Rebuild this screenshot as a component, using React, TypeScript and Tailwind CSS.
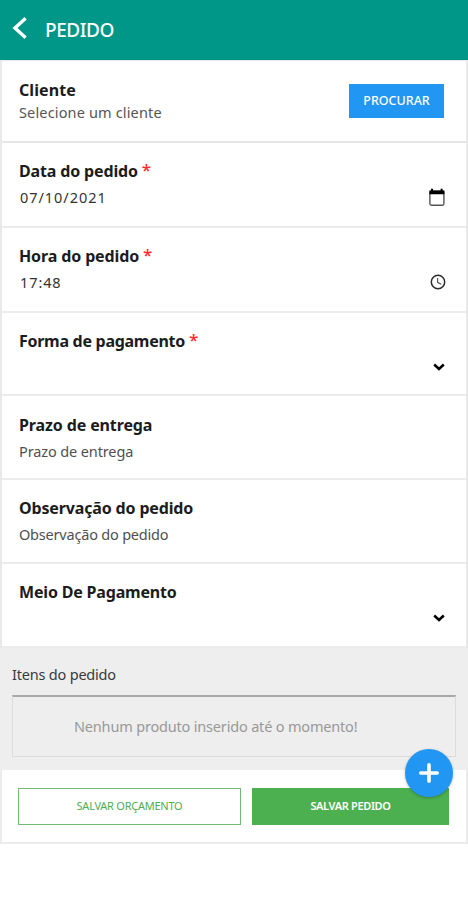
import { ReactNode } from 'react';
import clsx from 'clsx';

interface FieldProps {
  label: string;
  labelClass?: string;
  required?: boolean;
  value?: string;
  valueClass?: string;
  icon?: ReactNode;
  className: string;
}

const CalendarIcon = () => (
  <svg width="18" height="19" viewBox="0 0 18 19" fill="none">
    <rect x="1.9" y="3.2" width="14" height="14" rx="1.4" stroke="#555" strokeWidth="1.4" />
    <path d="M1.4 2.4h15v3.8h-15zM3 .8h2v2H3zM12.6.8h2v2h-2z" fill="#000" />
  </svg>
);

const ClockIcon = () => (
  <svg width="16" height="16" viewBox="0 0 16 16" fill="none">
    <circle cx="8" cy="8" r="6.7" stroke="#2b2b2b" strokeWidth="1.5" />
    <path d="M7.6 4v4.3l3.6 2" stroke="#555" strokeWidth="1.2" />
  </svg>
);

const ChevronIcon = () => (
  <svg width="12" height="8" viewBox="0 0 12 8" fill="none">
    <path d="M1.2 1.5 6 6l4.8-4.5" stroke="#000" strokeWidth="2.5" />
  </svg>
);

const Field = ({ label, labelClass, required, value, valueClass, icon, className }: FieldProps) => (
  <div className={clsx('flex flex-col border-b-2 border-[#ececec] bg-white pl-[17px]', className)}>
    <div className="flex h-6 items-center gap-1 whitespace-nowrap text-[16px] font-bold leading-6 text-[#1c1c1c]">
      <span className={labelClass}>{label}</span>
      {required && <span className="-mt-0.5 text-[17px] font-medium text-[#ff2a2a]">*</span>}
    </div>
    <div className="mt-0.5 flex h-6 items-center justify-between whitespace-nowrap text-[14.5px] leading-6 text-[#505050]">
      <span className={valueClass}>{value}</span>
      {icon}
    </div>
  </div>
);

export default function App() {
  return (
    <div className="relative h-[900px] w-[468px] overflow-hidden bg-white font-['Noto_Sans','Open_Sans',sans-serif]">
      <header className="flex h-[60px] items-center bg-[#009688] pl-3 text-white">
        <svg width="16" height="24" viewBox="0 0 16 24" fill="none" className="-mt-1">
          <path d="M13.6 2.3 3 12l10.6 9.7" stroke="#fff" strokeWidth="3.4" />
        </svg>
        <h1 className="ml-[17px] text-[19px] font-medium leading-6 tracking-[-0.45px]">PEDIDO</h1>
      </header>

      <main className="border-x-2 border-t border-[#e9e9e9]">
        <div className="flex h-[82px] items-center justify-between border-b-2 border-[#e6e6e6] bg-white pl-[17px] pr-[22px]">
          <div className="whitespace-nowrap pb-0.5">
            <div className="text-[16px] font-bold leading-6 tracking-[0.1px] text-[#1c1c1c]">Cliente</div>
            <div className="-mt-px text-[14.5px] leading-[22px] tracking-[0.15px] text-[#555]">Selecione um cliente</div>
          </div>
          <button className="h-[34px] w-[95px] bg-[#2196f3] text-[12.5px] font-medium text-white">PROCURAR</button>
        </div>

        <Field
          className="h-[85px] pt-[16px] pr-[20px]"
          label="Data do pedido"
          labelClass="tracking-[-0.15px]"
          required
          value="07/10/2021"
          valueClass="pl-px tracking-[0.95px] text-[#333]"
          icon={<CalendarIcon />}
        />
        <Field
          className="h-[85px] pt-[16px] pr-[20px]"
          label="Hora do pedido"
          labelClass="tracking-[-0.12px]"
          required
          value="17:48"
          valueClass="pl-px tracking-[0.9px] text-[#333]"
          icon={<ClockIcon />}
        />
        <Field
          className="h-[83px] pt-[16px] pr-[21px]"
          label="Forma de pagamento"
          labelClass="tracking-[-0.28px]"
          required
          icon={<ChevronIcon />}
        />
        <Field
          className="h-[84px] pt-[17px] pr-[21px]"
          label="Prazo de entrega"
          labelClass="tracking-[-0.12px]"
          value="Prazo de entrega"
          valueClass="tracking-[-0.12px]"
        />
        <Field
          className="h-[84px] pt-[16px] pr-[21px]"
          label="Observação do pedido"
          labelClass="tracking-[-0.15px]"
          value="Observação do pedido"
          valueClass="tracking-[-0.2px]"
        />
        <Field
          className="h-[84px] pt-[16px] pr-[21px]"
          label="Meio De Pagamento"
          labelClass="tracking-[-0.18px]"
          icon={<ChevronIcon />}
        />
      </main>

      <section className="h-[122px] bg-[#eee] px-3 pt-[14px]">
        <h2 className="text-[14.5px] leading-6 tracking-[-0.2px] text-[#3a3a3a]">Itens do pedido</h2>
        <div className="mt-[9px] h-[62px] border border-t-2 border-[#dcdcdc] border-t-[#a9a9a9] pl-[61px] text-[14.5px] leading-[58px] tracking-[-0.18px] text-[#999]">
          <span className="whitespace-nowrap">Nenhum produto inserido até o momento!</span>
        </div>
      </section>

      <footer className="flex h-[74px] gap-[11px] border-x-2 border-b-2 border-[#ececec] bg-white pl-4 pt-[18px]">
        <button className="h-[37px] w-[223px] border border-[#72bd76] text-[11px] tracking-[-0.25px] text-[#4caf50]">
          SALVAR ORÇAMENTO
        </button>
        <button className="h-[37px] w-[197px] bg-[#4caf50] text-[11px] font-semibold tracking-[-0.35px] text-white">
          SALVAR PEDIDO
        </button>
      </footer>

      <button className="absolute left-[405px] top-[749px] flex size-12 items-center justify-center rounded-full bg-[#2196f3] shadow-[0_1px_3px_rgba(0,0,0,0.25)]">
        <svg width="20" height="20" viewBox="0 0 20 20">
          <path d="M10 1.8v16.4M1.8 10h16.4" stroke="#fff" strokeWidth="3.6" strokeLinecap="round" />
        </svg>
      </button>
    </div>
  );
}
